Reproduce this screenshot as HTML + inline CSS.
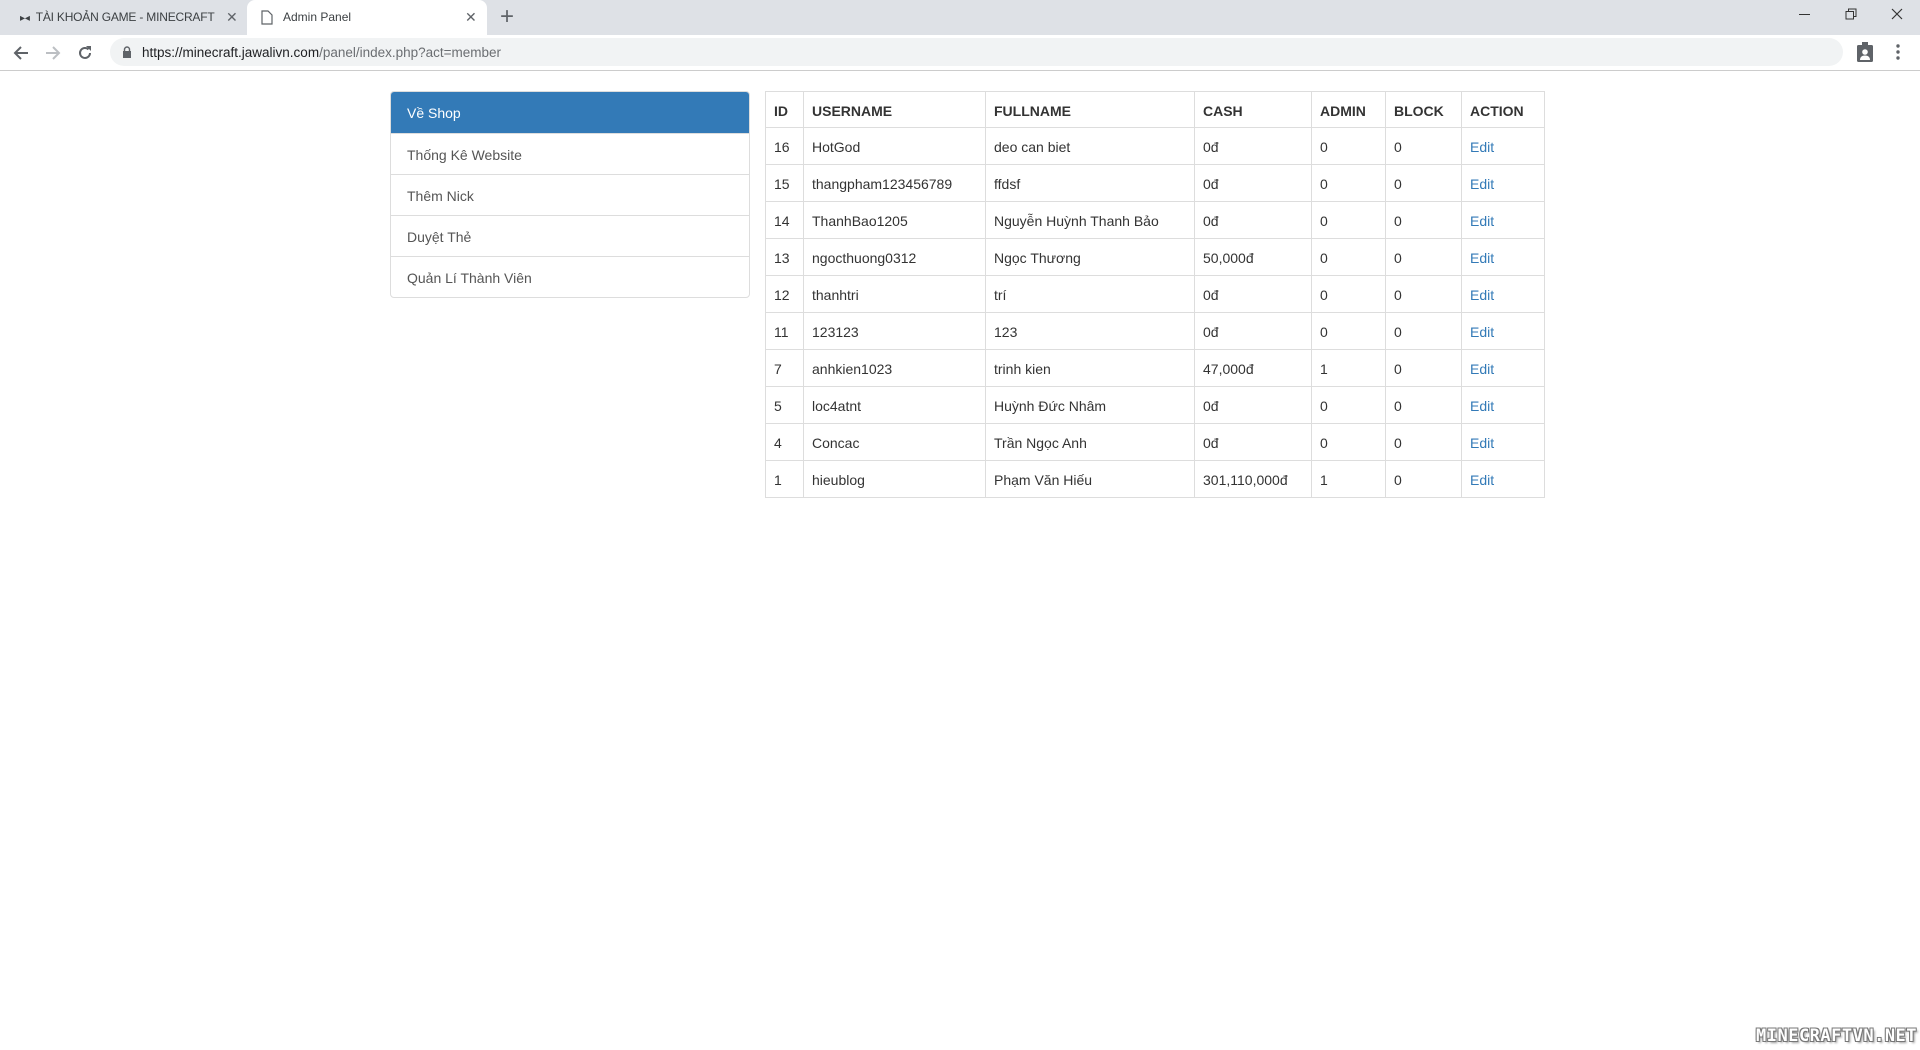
<!DOCTYPE html>
<html><head><meta charset="utf-8"><style>
*{box-sizing:border-box;margin:0;padding:0}
body{width:1920px;height:1050px;background:#fff;font-family:"Liberation Sans","Noto Sans CJK SC",sans-serif;position:relative;overflow:hidden;color:#333}
.tabbar{position:absolute;left:0;top:0;width:1920px;height:35px;background:#dee1e6}
.tab1{position:absolute;left:20px;top:10px;font-size:12px;color:#3c4043;letter-spacing:-0.2px}
.tab2{position:absolute;left:247px;top:0;width:240px;height:35px;background:#fff;border-radius:8px 8px 0 0}
.tab2 span{position:absolute;left:36px;top:10px;font-size:12px;color:#3c4043}
.x{position:absolute;font-size:14px;color:#5f6368;top:9px}
.toolbar{position:absolute;left:0;top:35px;width:1920px;height:36px;background:#fff;border-bottom:1px solid #ccc}
.omni{position:absolute;left:110px;top:3px;width:1733px;height:28px;background:#f1f3f4;border-radius:14px}
.omni .u{position:absolute;left:32px;top:7px;font-size:13.5px;color:#202124}
.omni .u span{color:#6b6e72}
.side{position:absolute;left:390px;top:91px;width:360px;border:1px solid #ddd;border-radius:4px;overflow:hidden}
.side div{height:41px;border-top:1px solid #ddd;padding:13px 16px 0;font-size:14px;color:#555}
.side div.a{background:#337ab7;color:#fff;border-top:0;height:41px}
table{position:absolute;left:765px;top:91px;border-collapse:collapse;font-size:14px;color:#333}
td,th{border:1px solid #ddd;height:37px;padding:2px 8px 0;text-align:left;white-space:nowrap}
th{height:36px;font-weight:bold;font-size:14px}
td a{color:#337ab7;text-decoration:none}
.wm{position:absolute;left:1756px;top:1026px;font-size:17px;font-weight:bold;color:#fff;letter-spacing:0.5px;text-shadow:-1px -1px 0 #777,1px -1px 0 #777,-1px 1px 0 #777,1px 1px 0 #777,2px 2px 2px #999;font-family:"DejaVu Sans Mono",monospace}
</style></head><body>
<div class="tabbar">
 <div class="tab1"><span style="font-size:10px">&#9656;&#9666;</span>&nbsp; TÀI KHOẢN GAME - MINECRAFT</div>
 <div class="x" style="left:226px">✕</div>
 <div class="tab2"><svg style="position:absolute;left:14px;top:10px" width="12" height="15"><path d="M1 1h6l4 4v9H1z" fill="none" stroke="#5f6368" stroke-width="1.2"/></svg><span>Admin Panel</span><div class="x" style="left:218px">✕</div></div>
 <div style="position:absolute;left:500px;top:3px;font-size:24px;color:#5f6368">+</div>
 <div style="position:absolute;left:1799px;top:14px;width:11px;height:1px;background:#333"></div>
 <svg style="position:absolute;left:1845px;top:8px" width="12" height="12"><path d="M1 3.5h7.5v7.5H1zM3.5 3.5V1H11v7.5H8.5" fill="none" stroke="#333"/></svg>
 <svg style="position:absolute;left:1891px;top:8px" width="12" height="12"><path d="M1 1l10 10M11 1L1 11" stroke="#333" stroke-width="1.2"/></svg>
</div>
<div class="toolbar">
 <svg style="position:absolute;left:13px;top:10px" width="16" height="16"><path d="M15 8H2M8 2L2 8l6 6" fill="none" stroke="#5f6368" stroke-width="2"/></svg>
 <svg style="position:absolute;left:45px;top:10px" width="16" height="16"><path d="M1 8h13M8 2l6 6-6 6" fill="none" stroke="#bcbfc3" stroke-width="2"/></svg>
 <svg style="position:absolute;left:77px;top:10px" width="16" height="16"><path d="M13 8a5 5 0 1 1-1.5-3.6" fill="none" stroke="#5f6368" stroke-width="2"/><path d="M9 1h5v5z" fill="#5f6368"/></svg>
 <div class="omni"><svg style="position:absolute;left:12px;top:8px" width="10" height="12"><rect x="1" y="5" width="8" height="7" fill="#5f6368"/><path d="M2.5 5V3.5a2.5 2.5 0 0 1 5 0V5" fill="none" stroke="#5f6368" stroke-width="1.4"/></svg><div class="u">https://minecraft.jawalivn.com<span>/panel/index.php?act=member</span></div></div>
 <svg style="position:absolute;left:1857px;top:7px" width="16" height="20"><rect x="0" y="3" width="16" height="17" rx="1.5" fill="#5f6368"/><rect x="5" y="0" width="6" height="4" fill="#5f6368"/><circle cx="8" cy="10" r="2.8" fill="#fff"/><path d="M3 18c0-3 2-4.5 5-4.5s5 1.5 5 4.5z" fill="#fff"/></svg>
 <svg style="position:absolute;left:1896px;top:9px" width="4" height="16"><circle cx="2" cy="2" r="1.7" fill="#5f6368"/><circle cx="2" cy="8" r="1.7" fill="#5f6368"/><circle cx="2" cy="14" r="1.7" fill="#5f6368"/></svg>
</div>
<div class="side">
 <div class="a">Về Shop</div>
 <div>Thống Kê Website</div>
 <div>Thêm Nick</div>
 <div>Duyệt Thẻ</div>
 <div>Quản Lí Thành Viên</div>
</div>
<table>
<colgroup><col style="width:38px"><col style="width:182px"><col style="width:209px"><col style="width:117px"><col style="width:74px"><col style="width:76px"><col style="width:83px"></colgroup>
<tr><th>ID</th><th>USERNAME</th><th>FULLNAME</th><th>CASH</th><th>ADMIN</th><th>BLOCK</th><th>ACTION</th></tr>
<tr><td>16</td><td>HotGod</td><td>deo can biet</td><td>0đ</td><td>0</td><td>0</td><td><a>Edit</a></td></tr>
<tr><td>15</td><td>thangpham123456789</td><td>ffdsf</td><td>0đ</td><td>0</td><td>0</td><td><a>Edit</a></td></tr>
<tr><td>14</td><td>ThanhBao1205</td><td>Nguyễn Huỳnh Thanh Bảo</td><td>0đ</td><td>0</td><td>0</td><td><a>Edit</a></td></tr>
<tr><td>13</td><td>ngocthuong0312</td><td>Ngọc Thương</td><td>50,000đ</td><td>0</td><td>0</td><td><a>Edit</a></td></tr>
<tr><td>12</td><td>thanhtri</td><td>trí</td><td>0đ</td><td>0</td><td>0</td><td><a>Edit</a></td></tr>
<tr><td>11</td><td>123123</td><td>123</td><td>0đ</td><td>0</td><td>0</td><td><a>Edit</a></td></tr>
<tr><td>7</td><td>anhkien1023</td><td>trinh kien</td><td>47,000đ</td><td>1</td><td>0</td><td><a>Edit</a></td></tr>
<tr><td>5</td><td>loc4atnt</td><td>Huỳnh Đức Nhâm</td><td>0đ</td><td>0</td><td>0</td><td><a>Edit</a></td></tr>
<tr><td>4</td><td>Concac</td><td>Trần Ngọc Anh</td><td>0đ</td><td>0</td><td>0</td><td><a>Edit</a></td></tr>
<tr><td>1</td><td>hieublog</td><td>Phạm Văn Hiếu</td><td>301,110,000đ</td><td>1</td><td>0</td><td><a>Edit</a></td></tr>
</table>
<div class="wm">MINECRAFTVN.NET</div>
</body></html>
